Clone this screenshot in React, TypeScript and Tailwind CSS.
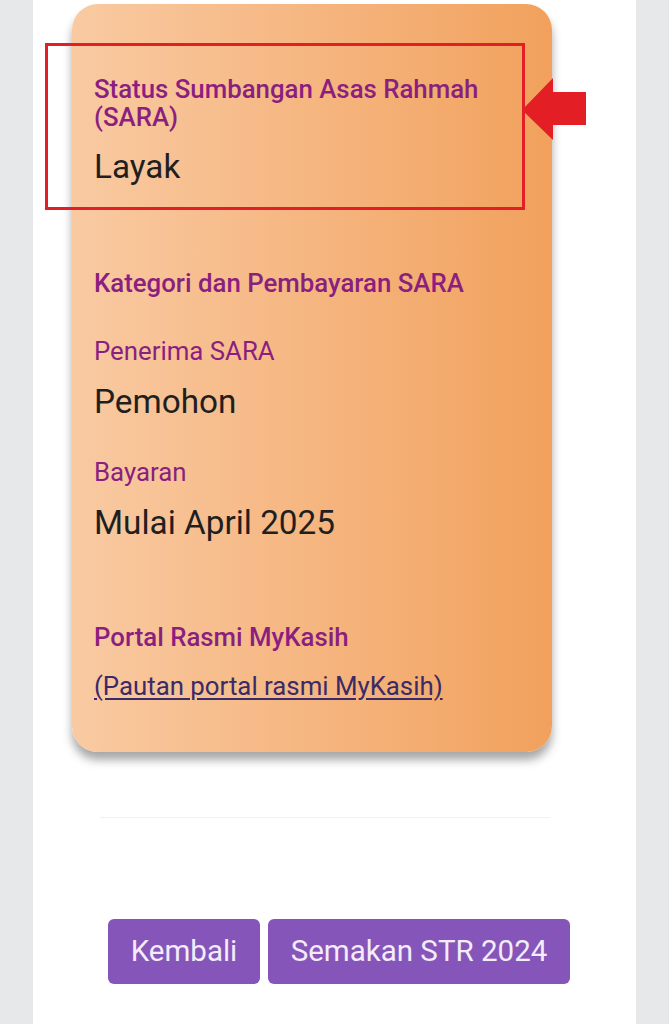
import React from 'react';

const purple = 'text-[#8a1f80]';

function Label({ children, bold = false, className = '' }: { children: React.ReactNode; bold?: boolean; className?: string }) {
    return (
        <p className={`${purple} text-[25.8px] leading-[28px] ${bold ? 'font-medium' : 'font-normal'} ${className}`}>
            {children}
        </p>
    );
}

function Value({ children, className = '' }: { children: React.ReactNode; className?: string }) {
    return <p className={`text-[#1f1f1f] text-[33.3px] leading-[36px] ${className}`}>{children}</p>;
}

export default function App() {
    return (
        <div className="min-h-[1024px] bg-[#e7e8ea] font-['Roboto',sans-serif]">
            <div className="relative mx-[33px] min-h-[1024px] bg-white pt-[4px]">
                {/* card */}
                <div className="ml-[39px] w-[480px] rounded-[26px] bg-gradient-to-r from-[#f9caa2] to-[#f1a15c] pl-[22px] pr-[40px] pt-[71px] pb-[52px] shadow-[0_8px_10px_rgba(0,0,0,0.35)]">
                    <Label bold>Status Sumbangan Asas Rahmah (SARA)</Label>
                    <Value className="mt-[18px]">Layak</Value>

                    <Label bold className="mt-[84px]">Kategori dan Pembayaran SARA</Label>

                    <Label className="mt-[40px]">Penerima SARA</Label>
                    <Value className="mt-[19px]">Pemohon</Value>

                    <Label className="mt-[38px]">Bayaran</Label>
                    <Value className="mt-[19px]">Mulai April 2025</Value>

                    <Label bold className="mt-[82px]">Portal Rasmi MyKasih</Label>
                    <a href="#" className="mt-[21px] block text-[25.8px] leading-[28px] text-[#3b2a68] underline underline-offset-[3px]">
                        (Pautan portal rasmi MyKasih)
                    </a>
                </div>

                {/* divider */}
                <div className="ml-[67px] mt-[65px] h-px w-[450px] bg-[#f1f1f1]" />

                {/* buttons */}
                <div className="mt-[101px] flex gap-[8px] pl-[75px]">
                    <button className="h-[65px] w-[152px] rounded-[6px] bg-[#8655b9] text-[29.5px] text-[#f3ecfa]">Kembali</button>
                    <button className="h-[65px] w-[302px] rounded-[6px] bg-[#8655b9] text-[29.5px] text-[#f3ecfa]">Semakan STR 2024</button>
                </div>

                {/* annotation box */}
                <div className="absolute left-[12px] top-[43px] h-[167px] w-[480px] border-[3px] border-[#e31e25]" />
                {/* annotation arrow */}
                <svg className="absolute left-[489px] top-[78px]" width="66" height="64" viewBox="0 0 66 64">
                    <path d="M0 32 L31 0 L31 14 L64 14 L64 47 L31 47 L31 62 Z" fill="#e31e25" />
                </svg>
            </div>
        </div>
    );
}
